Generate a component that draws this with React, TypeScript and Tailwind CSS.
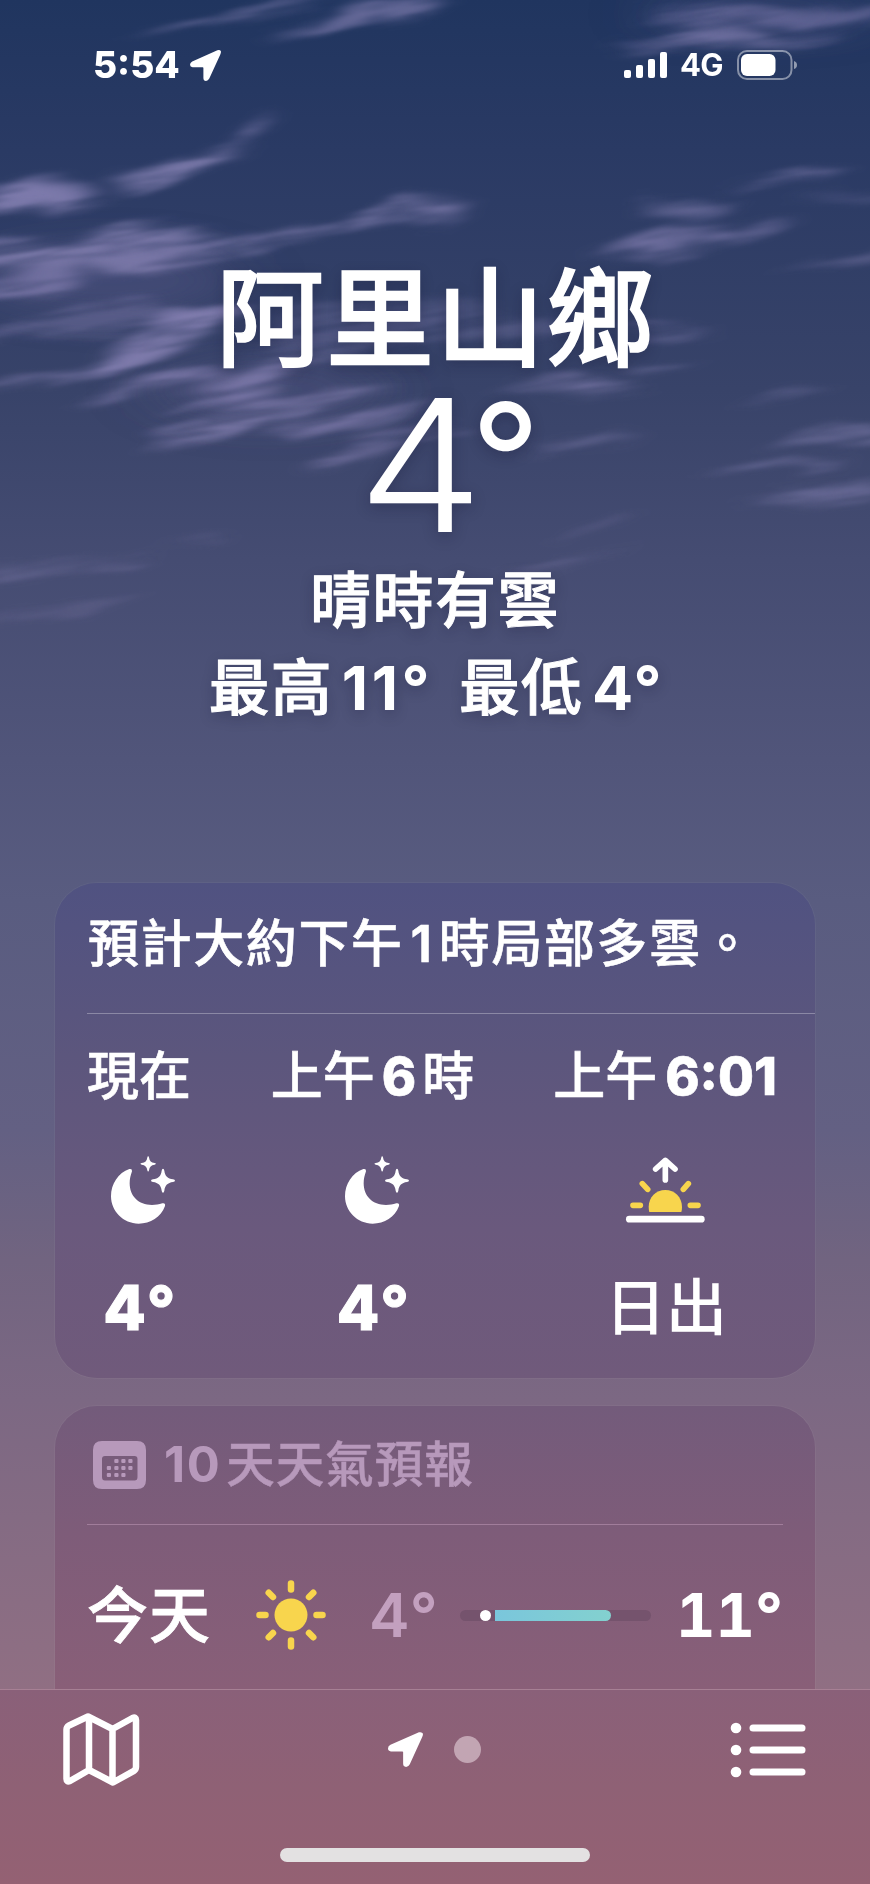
import type { ReactNode } from "react";

type Streak = { d: string; o: number };

const CLOUDS: Streak[] = [
  { d: "M-20 150Q35 140 70 147Q90 152 108 156Q60 166 -20 163Z", o: 0.72 },
  { d: "M115 139Q165 136 205 118Q240 108 275 88Q250 112 215 132Q180 147 150 149Q130 147 115 139Z", o: 0.66 },
  { d: "M125 30Q180 14 225 8Q280 3 330 -6L345 -2Q280 10 225 14Q170 20 125 30Z", o: 0.55 },
  { d: "M270 28Q330 10 380 2L450 -4L440 4Q350 16 270 28Z", o: 0.55 },
  { d: "M-20 190Q30 186 60 200Q90 190 110 182Q150 176 185 184Q205 194 240 190Q300 176 345 172Q385 158 400 152Q440 160 472 169Q440 179 400 177Q350 177 310 190Q260 198 220 202Q170 214 130 214Q90 208 60 214Q30 220 -20 206Z", o: 0.6 },
  { d: "M-20 226Q50 214 78 212Q82 226 60 232Q30 236 -20 236Z", o: 0.5 },
  { d: "M-20 306Q60 296 98 287Q140 264 180 246Q215 240 245 248Q215 264 180 272Q150 290 110 294Q60 300 -20 309Z", o: 0.72 },
  { d: "M-20 262Q70 248 120 240Q170 238 200 250Q140 262 90 268Q40 268 -20 270Z", o: 0.25 },
  { d: "M84 322Q120 302 160 296Q200 291 225 295Q190 305 150 308Q115 314 88 324Z", o: 0.62 },
  { d: "M165 325Q200 304 240 296Q270 286 305 282Q280 300 270 314Q250 318 215 320Q190 322 165 325Z", o: 0.55 },
  { d: "M160 340Q210 326 270 320Q330 312 390 304Q330 328 270 334Q220 342 200 354Q180 358 155 360Q175 348 160 340Z", o: 0.6 },
  { d: "M262 344Q310 334 360 329Q395 320 420 312Q390 332 345 338Q300 344 262 344Z", o: 0.62 },
  { d: "M325 356Q370 340 410 334Q440 334 470 346Q430 352 390 356Q350 372 320 372Z", o: 0.35 },
  { d: "M280 250Q350 236 420 238Q520 246 600 262Q500 276 400 272Q330 280 270 290Q280 270 280 250Z", o: 0.22 },
  { d: "M-20 450Q80 440 150 442Q120 452 60 452Q20 456 -20 456Z", o: 0.26 },
  { d: "M-20 492Q60 478 140 470Q110 482 60 484Q20 490 -20 495Z", o: 0.2 },
  { d: "M170 434Q200 424 225 426Q200 432 170 434Z", o: 0.2 },
  { d: "M605 38Q650 32 690 22Q730 20 770 28Q810 22 835 24Q800 36 750 34Q700 34 605 38Z", o: 0.55 },
  { d: "M640 12Q700 0 760 6Q820 8 890 4L890 12Q800 20 740 18Q680 22 640 12Z", o: 0.4 },
  { d: "M735 147Q770 134 800 134Q825 132 845 138Q805 149 770 149Q750 150 735 147Z", o: 0.45 },
  { d: "M640 163Q690 156 735 165Q730 174 708 174Q680 168 640 163Z", o: 0.48 },
  { d: "M595 197Q640 184 675 180Q720 188 795 174Q750 190 700 192Q660 204 635 202Q620 200 595 197Z", o: 0.5 },
  { d: "M780 220Q820 208 890 196L890 204Q820 212 780 220Z", o: 0.36 },
  { d: "M790 160Q830 156 890 148L890 156Q830 160 790 160Z", o: 0.22 },
  { d: "M500 306Q550 294 600 302L640 305Q600 312 570 315Q540 308 500 306Z", o: 0.45 },
  { d: "M620 260Q670 256 710 263Q670 266 620 266Z", o: 0.34 },
  { d: "M620 290Q670 286 700 288Q670 294 620 294Z", o: 0.38 },
  { d: "M740 321Q790 308 830 308Q790 318 740 321Z", o: 0.32 },
  { d: "M775 354Q820 338 890 342L890 352Q830 352 775 354Z", o: 0.38 },
  { d: "M700 377Q770 362 850 370Q810 378 770 374Q730 376 700 377Z", o: 0.38 },
  { d: "M745 398Q800 382 890 380L890 388Q850 400 825 398Q790 394 745 398Z", o: 0.38 },
  { d: "M530 358Q580 348 640 344Q600 356 545 360Z", o: 0.32 },
  { d: "M510 450Q570 440 640 434Q590 446 510 454Z", o: 0.26 },
  { d: "M560 424Q600 410 640 406Q600 420 560 428Z", o: 0.2 },
];

function Sky() {
  return (
    <svg className="absolute inset-x-0 top-0" width="870" height="700" viewBox="0 0 870 700" aria-hidden>
      <defs>
        <filter id="wisp" x="-60" y="-60" width="990" height="900" filterUnits="userSpaceOnUse" colorInterpolationFilters="sRGB">
          <feTurbulence type="fractalNoise" baseFrequency="0.008 0.03" numOctaves="3" seed="8" result="n" />
          <feTurbulence type="fractalNoise" baseFrequency="0.007 0.07" numOctaves="4" seed="21" result="n2" />
          <feGaussianBlur in="SourceGraphic" stdDeviation="12 3.5" result="g" />
          <feDisplacementMap in="g" in2="n" scale="30" xChannelSelector="R" yChannelSelector="G" result="s" />
          <feGaussianBlur in="s" stdDeviation="5 1.8" result="b" />
          <feColorMatrix in="n2" type="matrix" values="0 0 0 0 1  0 0 0 0 1  0 0 0 0 1  0 0 3.4 0 -1.0" result="m" />
          <feComposite in="b" in2="m" operator="in" result="t0" />
          <feGaussianBlur in="t0" stdDeviation="3 1" result="t" />
          <feComponentTransfer in="b" result="soft">
            <feFuncA type="linear" slope="0.42" />
          </feComponentTransfer>
          <feMerge>
            <feMergeNode in="soft" />
            <feMergeNode in="t" />
          </feMerge>
        </filter>
        <filter id="haze" x="-50%" y="-100%" width="200%" height="300%">
          <feGaussianBlur stdDeviation="34 18" />
        </filter>
      </defs>
      <g fill="#6a6598" filter="url(#haze)">
        <ellipse cx="110" cy="280" rx="130" ry="34" opacity="0.3" />
        <ellipse cx="270" cy="390" rx="120" ry="34" opacity="0.22" />
        <ellipse cx="760" cy="14" rx="110" ry="18" opacity="0.28" />
      </g>
      <g fill="#8f88bb" filter="url(#wisp)" transform="skewY(-8)">
        <g transform="skewY(8) scale(1 1.263)">
          {CLOUDS.map((c) => (
            <path key={c.d} d={c.d} opacity={c.o} />
          ))}
        </g>
      </g>
    </svg>
  );
}

function LocationArrow({ className }: { className: string }) {
  return (
    <svg className={className} viewBox="0 0 31 31" fill="currentColor" aria-hidden>
      <path d="M27.4.3Q30.2-.4 31 1.6Q31 3 30.2 4.700L19.300 28.600Q18 31 16 31Q13.400 30.800 13.400 28V17.900Q13.400 17.200 12.700 17.200H2.600Q.1 17 0 14.700Q0 12.600 2.200 11.400Z" />
    </svg>
  );
}

function StatusBar() {
  return (
    <header className="flex h-[50px] items-center pr-[73px] pl-[93px]">
      <span className="w-[97px] text-[37px] leading-[50px] font-extrabold">5:54</span>
      <LocationArrow className="size-[31px]" />
      <div className="ml-auto flex items-end gap-[4.500px]">
        <i className="h-[8px] w-[7.500px] rounded-[2px] bg-white" />
        <i className="h-[13px] w-[7.500px] rounded-[2px] bg-white" />
        <i className="h-[19px] w-[7.500px] rounded-[2px] bg-white" />
        <i className="h-[26px] w-[7.500px] rounded-[2px] bg-white" />
      </div>
      <span className="ml-[13px] w-[44px] text-[31px] leading-[50px] font-bold tracking-[-0.800px]">4G</span>
      <svg className="ml-[13px]" width="60" height="30" viewBox="0 0 60 30" aria-hidden>
        <rect x="1" y="1" width="53.500" height="28" rx="9" fill="none" stroke="#fff" strokeOpacity="0.45" strokeWidth="2" />
        <rect x="4" y="4" width="34.500" height="22" rx="6" fill="#fff" />
        <path d="M57 11Q60 12 60 15Q60 18 57 19Z" fill="#fff" fillOpacity="0.5" />
      </svg>
    </header>
  );
}

function MoonStars() {
  const star =
    "M0-36Q3-36 4-30C6-14 14-6 30-4Q36-3 36 0Q36 3 30 4C14 6 6 14 4 30Q3 36 0 36Q-3 36-4 30C-6 14-14 6-30 4Q-36 3-36 0Q-36-3-30-4C-14-6-6-14-4-30Q-3-36 0-36Z";
  return (
    <svg width="120" height="100" viewBox="-2 0 360 300" fill="#fff" aria-hidden>
      <path d="M157 94Q158 85 149 87C116 98 94 132 94 169C94 214 131 251 177 251C212 251 244 231 256 198Q258 188 248 190C238 194 228 195 217 195C176 195 150 168 150 130C150 116 153 106 157 94Z" />
      <path d={star} transform="translate(250 122)" />
      <path d={star} transform="translate(205.500 71.500) scale(.64)" />
    </svg>
  );
}

function Sunrise() {
  return (
    <svg width="120" height="100" viewBox="-15 -15 360 300" fill="none" strokeLinecap="round" strokeLinejoin="round" aria-hidden>
      <path d="M118 201Q116 194 116 186C116 157 138 135 166 135C194 135 216 157 216 186Q216 194 214 201Z" fill="#f8d54d" />
      <path d="M69 181H91M241 181H264M97 116L113 133M235 116L220 133" stroke="#f8d54d" strokeWidth="17" />
      <path d="M166 50V105M137 72L166 46L195 72" stroke="#fff" strokeWidth="17" />
      <path d="M58 222.500H274" stroke="#fff" strokeWidth="20" />
    </svg>
  );
}

function Sun() {
  const angles = [0, 45, 90, 135, 180, 225, 270, 315];
  return (
    <svg width="70" height="70" viewBox="-35 -35 70 70" aria-hidden>
      <circle r="16.500" fill="#f8d54d" />
      {angles.map((a) => (
        <path key={a} d="M0-25.500V-31.500" transform={`rotate(${a})`} stroke="#f8d54d" strokeWidth="6.500" strokeLinecap="round" />
      ))}
    </svg>
  );
}

function CalendarIcon() {
  const dots = [
    [23.500, 20], [30.500, 20], [37.500, 20],
    [16, 27], [23.500, 27], [30.500, 27], [37.500, 27],
    [16, 34], [23.500, 34], [30.500, 34],
  ];
  return (
    <svg width="53" height="48" viewBox="0 0 53 48" fill="#b799bb" aria-hidden>
      <path fillRule="evenodd" d="M9 0H44Q53 0 53 9V39Q53 48 44 48H9Q0 48 0 39V9Q0 0 9 0ZM12 15Q9 15 9 18V36Q9 39.500 12 39.500H41.500Q44.500 39.500 44.500 36V18Q44.500 15 41.500 15Z" />
      {dots.map(([x, y]) => (
        <rect key={`${x}-${y}`} x={x - 2.200} y={y - 2} width="4.200" height="4" rx="1" />
      ))}
    </svg>
  );
}

function Hour({ label, icon, value, className }: { label: ReactNode; icon: ReactNode; value: ReactNode; className: string }) {
  return (
    <div className={`flex flex-col items-center whitespace-nowrap ${className}`}>
      <div className="h-[60px] text-[52px] leading-[60px] font-medium">{label}</div>
      <div className="mt-[33px] h-[100px]">{icon}</div>
      <div className="mt-[28px] h-[80px] text-[61px] leading-[80px]">{value}</div>
    </div>
  );
}

function HourTemp({ children }: { children: ReactNode }) {
  return <span className="pl-[4px] text-[62px] font-extrabold tracking-[3.500px] [-webkit-text-stroke:1px_white]">{children}</span>;
}

export default function App() {
  return (
    <div className="relative flex h-[1884px] w-[870px] flex-col overflow-hidden bg-[linear-gradient(180deg,#20355f_0px,#2a3a64_150px,#384369_390px,#454c72_560px,#51557a_760px,#595c80_900px,#636083_1130px,#716480_1260px,#7c6883_1400px,#876c83_1560px,#906f83_1690px)] font-['Inter','Noto_Sans_CJK_TC',sans-serif] text-white">
      <Sky />
      <div className="relative flex flex-col pt-[40px]">
        <StatusBar />

        <section className="flex flex-col items-center whitespace-nowrap [text-shadow:0_4px_14px_rgba(20,20,50,0.3)]">
          <h1 className="mt-[174px] pl-[2px] text-[108px] leading-[110px] font-medium tracking-[2px] [-webkit-text-stroke:1.500px_white]">阿里山鄉</h1>
          <div className="mt-[16px] flex h-[150px] pl-[27px] text-[184px] leading-[150px] font-light">
            <span className="w-[112px] origin-left translate-x-[1.500px] scale-x-[1.090]">4</span>
            <span className="ml-[2px] text-[154px] leading-[137px] font-normal">°</span>
          </div>
          <p className="mt-[21px] text-[61px] leading-[80px] font-medium tracking-[1.500px] [-webkit-text-stroke:1px_white]">晴時有雲</p>
          <p className="mt-[7px] flex pl-[3px] text-[61px] leading-[80px] font-medium tracking-[1px]">
            <span className="[-webkit-text-stroke:1px_white]">最高</span>
            <span className="ml-[9px] font-bold tracking-[3.500px]">11°</span>
            <span className="ml-[26px] [-webkit-text-stroke:1px_white]">最低</span>
            <span className="ml-[9px] font-bold tracking-[2.500px]">4°</span>
          </p>
        </section>

        <section className="mt-[155px] ml-[55px] h-[495px] w-[760px] rounded-[42px] bg-[linear-gradient(180deg,#505281,#5c567d_35%,#6a597d_70%,#705a7b)] pt-[31px] pl-[33px] shadow-[0_0_0_1px_rgba(255,255,255,0.04)]">
          <p className="flex h-[60px] text-[51px] leading-[60px] font-medium tracking-[1.600px] whitespace-nowrap [-webkit-text-stroke:0.600px_white]">
            <span>預計大約下午</span>
            <span className="ml-[7px] font-semibold">1</span>
            <span className="ml-[5px]">時局部多雲。</span>
          </p>
          <div className="mt-[39px] -ml-px h-px bg-white/30" />
          <div className="mt-[33px] -ml-px flex">
            <Hour
              className="w-[104px]"
              label={<span className="[-webkit-text-stroke:0.600px_white]">現在</span>}
              icon={<MoonStars />}
              value={<HourTemp>4°</HourTemp>}
            />
            <Hour
              className="ml-[79px] w-[205px]"
              label={<span className="[-webkit-text-stroke:0.600px_white]">上午<span className="mr-[6px] ml-[7px] font-extrabold">6</span>時</span>}
              icon={<MoonStars />}
              value={<HourTemp>4°</HourTemp>}
            />
            <Hour
              className="ml-[77px] w-[226px]"
              label={<span className="[-webkit-text-stroke:0.600px_white]">上午<span className="ml-[8px] font-extrabold">6:01</span></span>}
              icon={<Sunrise />}
              value={<span className="pl-[2px] font-medium">日出</span>}
            />
          </div>
        </section>

        <section className="mt-[28px] ml-[55px] h-[283px] w-[760px] rounded-t-[42px] bg-[linear-gradient(180deg,#735b7b,#7e5c79_45%,#895f78)] px-[32px] pt-[29px] shadow-[0_0_0_1px_rgba(255,255,255,0.04)]">
          <div className="flex h-[60px] items-center pl-[6px] text-[49px] leading-[60px] font-medium text-[#b799bb]">
            <CalendarIcon />
            <span className="ml-[18px] font-bold tracking-[1.500px]">10</span>
            <span className="ml-[5px] text-[48.500px] tracking-[1px] [-webkit-text-stroke:0.500px_#b799bb]">天天氣預報</span>
          </div>
          <div className="mt-[29px] h-px bg-[#a17d9b]" />
          <div className="mt-[50px] flex h-[80px] items-center text-[61px] leading-[80px]">
            <span className="w-[124px] pt-[2px] font-medium tracking-[1px] [-webkit-text-stroke:0.800px_white]">今天</span>
            <span className="ml-[45px]"><Sun /></span>
            <span className="ml-[43px] w-[70px] font-semibold tracking-[2px] text-[#c3a0bf]">4°</span>
            <div className="ml-[21px] flex h-[11px] w-[191px] items-center rounded-full bg-[#75536d]">
              <i className="ml-[20px] size-[11px] rounded-full bg-white" />
              <i className="ml-[4px] h-[11px] w-[116px] rounded-r-full bg-[linear-gradient(90deg,#7ac6dc,#83d1cf)]" />
            </div>
            <span className="ml-auto font-bold tabular-nums">11°</span>
          </div>
        </section>

        <footer className="flex h-[195px] flex-col items-center border-t border-[#a78094] bg-[linear-gradient(180deg,#8a6079,#8f6175_50%,#946173)]">
          <div className="mt-[22px] flex h-[74px] w-full items-center pr-[64px] pl-[62px]">
            <svg width="78" height="74" viewBox="0 0 78 74" fill="none" stroke="#fff" strokeWidth="6.500" strokeLinejoin="round" aria-hidden>
              <path d="M4.500 17.500Q4.500 15 7 13.500L26 4.500L50.500 17L70.500 6Q74 4.600 74 8V55Q74 57.600 71.500 59.100L51 70.500L27 58L8 69Q4.500 70.500 4.500 67ZM27 6V57M50.500 17V69" />
            </svg>
            <LocationArrow className="ml-[248px] size-[35px]" />
            <i className="ml-[31px] size-[27px] rounded-full bg-[#c2a5b3]" />
            <svg className="mt-[2px] ml-auto" width="76" height="56" viewBox="0 0 76 56" fill="#fff" aria-hidden>
              {[6, 28, 50].map((y) => (
                <g key={y}>
                  <circle cx="6" cy={y} r="5.300" />
                  <rect x="19.500" y={y - 3.500} width="56" height="7" rx="3.500" />
                </g>
              ))}
            </svg>
          </div>
          <div className="mt-[62px] h-[14px] w-[310px] rounded-full bg-[#e3e1e2]" />
        </footer>
      </div>
    </div>
  );
}
